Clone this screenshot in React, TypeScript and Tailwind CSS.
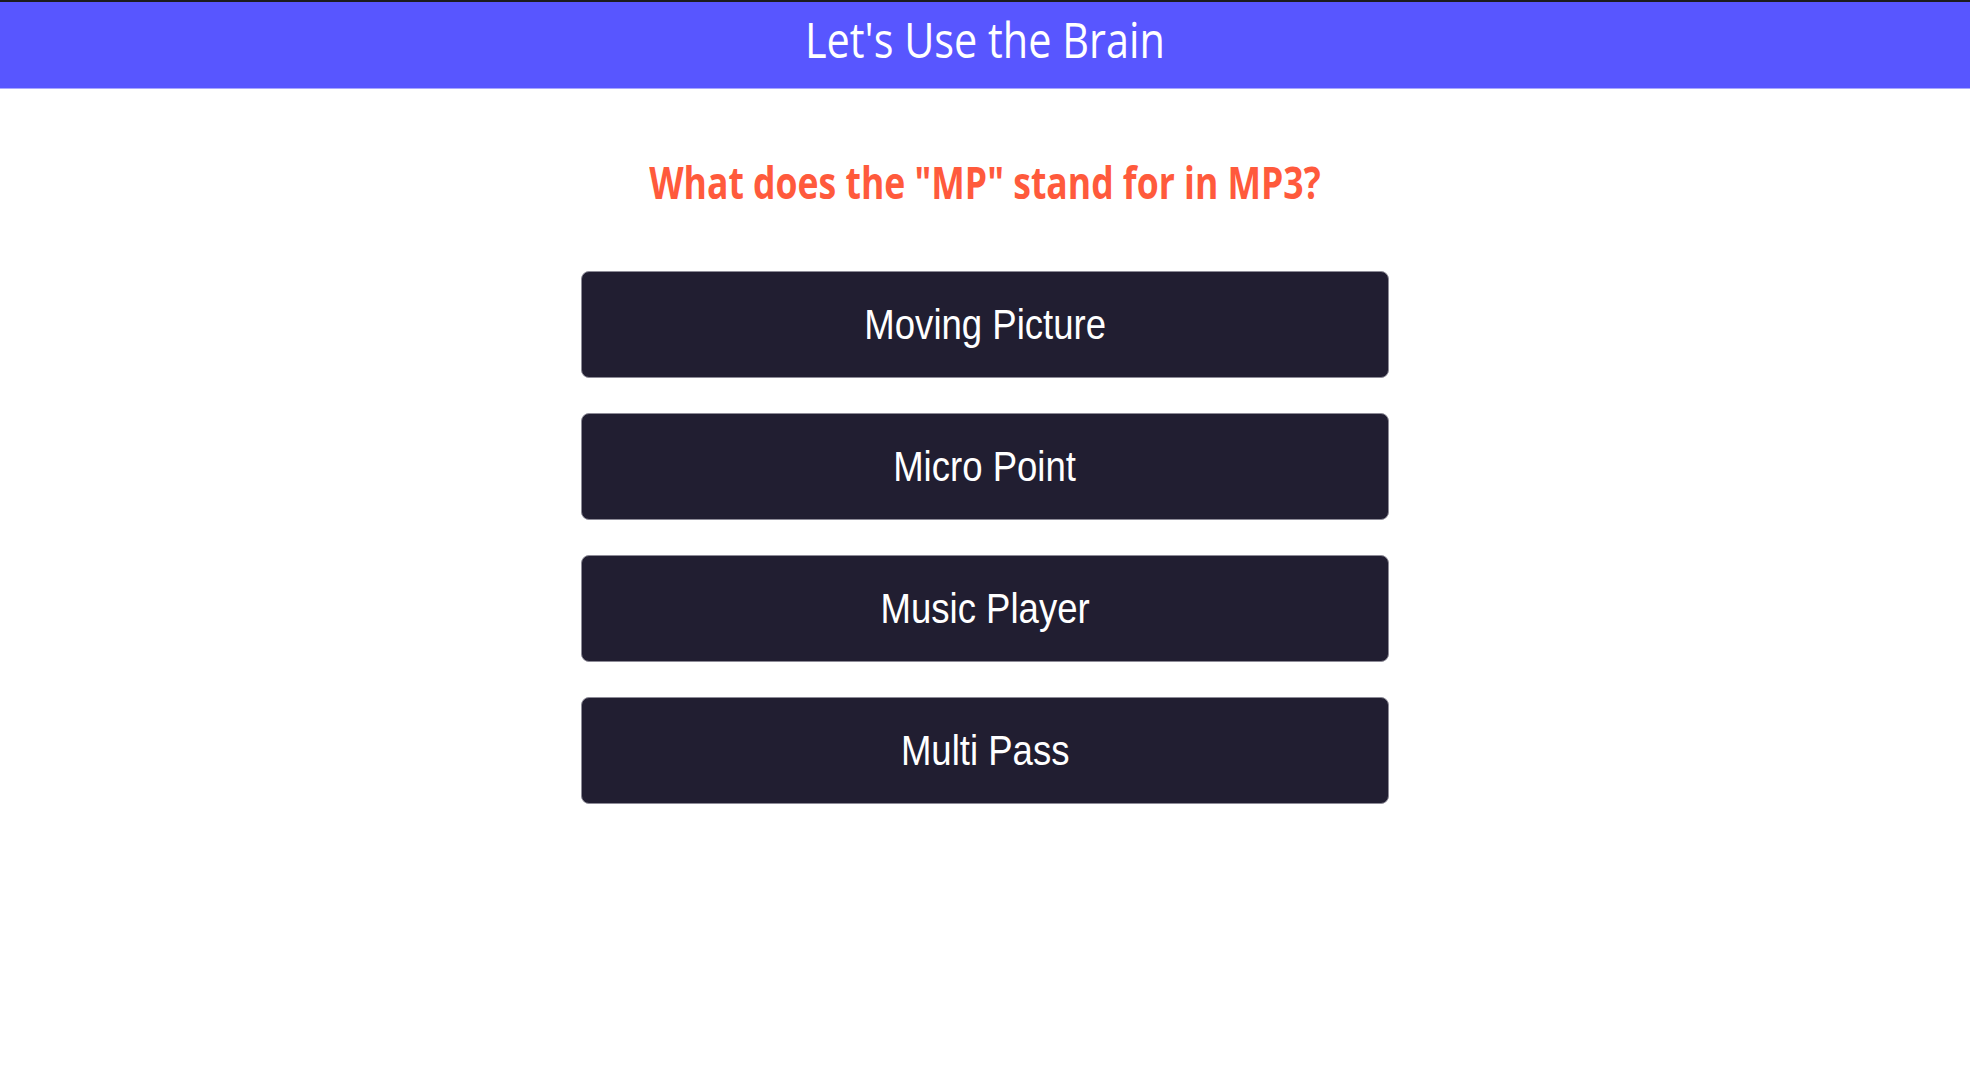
import React from 'react';

const options = ['Moving Picture', 'Micro Point', 'Music Player', 'Multi Pass'];

export default function App() {
    return (
        <div className="min-h-screen bg-white">
            <header className="h-[89px] bg-[#5856ff] border-t-2 border-[#1c1c1c] border-b border-b-[#a9a8ff] flex items-center justify-center pb-[12px]">
                <h1 className="text-white text-[49px] leading-none font-['Open_Sans',sans-serif] font-normal">
                    <span className="inline-block scale-x-[0.845]">Let's Use the Brain</span>
                </h1>
            </header>

            <main className="flex flex-col items-center">
                <h2 className="mt-[70px] text-[#ff5a3c] text-[45px] leading-none font-bold font-['Open_Sans',sans-serif] whitespace-nowrap">
                    <span className="inline-block scale-x-[0.79]">What does the "MP" stand for in MP3?</span>
                </h2>

                <div className="mt-[67px] flex flex-col gap-[35px]">
                    {options.map((opt) => (
                        <button
                            key={opt}
                            className="w-[808px] h-[107px] rounded-lg bg-[#211e31] border border-[#8d8b97] text-white text-[43px] font-['Liberation_Sans',Arial,sans-serif] flex items-center justify-center"
                        >
                            <span className="inline-block scale-x-[0.85]">{opt}</span>
                        </button>
                    ))}
                </div>
            </main>
        </div>
    );
}
